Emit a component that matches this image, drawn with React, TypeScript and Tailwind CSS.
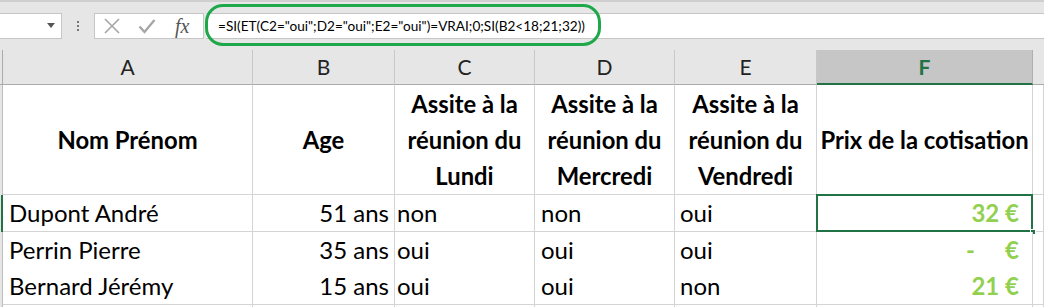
import React from 'react';

type Row = {
  name: string;
  age: string;
  c: string;
  d: string;
  e: string;
  price: string;
  selected?: boolean;
};

const rows: Row[] = [
  { name: 'Dupont André', age: '51 ans', c: 'non', d: 'non', e: 'oui', price: '32', selected: true },
  { name: 'Perrin Pierre', age: '35 ans', c: 'oui', d: 'oui', e: 'oui', price: '-' },
  { name: 'Bernard Jérémy', age: '15 ans', c: 'oui', d: 'oui', e: 'non', price: '21' },
];

const formula = '=SI(ET(C2="oui";D2="oui";E2="oui")=VRAI;0;SI(B2<18;21;32))';

const cols = 'grid grid-cols-[3px_250px_142px_140px_140px_142px_216px_1fr]';
const cell = 'border-r border-b border-[#d4d4d4] bg-white';

function FormulaBar() {
  return (
    <div className="relative h-[50px] bg-[#e6e6e6] border-t-2 border-[#cfcfcf]">
      <div className="flex items-center h-[37px] pt-[11px]">
        <div className="relative w-[62px] h-[26px] bg-white border border-[#c6c6c6] border-l-0">
          <div className="absolute right-[6px] top-[9px] w-0 h-0 border-l-[4px] border-r-[4px] border-t-[5px] border-l-transparent border-r-transparent border-t-[#555]" />
        </div>
        <div className="w-[32px] flex flex-col items-center gap-[2px]">
          <span className="w-[2px] h-[2px] bg-[#777]" />
          <span className="w-[2px] h-[2px] bg-[#777]" />
          <span className="w-[2px] h-[2px] bg-[#777]" />
        </div>
        <div className="flex items-center w-[110px] h-[26px] bg-white border border-[#c6c6c6]">
          <svg className="ml-[8px]" width="18" height="16" viewBox="0 0 18 16">
            <path d="M2 1 L16 15 M16 1 L2 15" stroke="#a6a6a6" strokeWidth="1.6" fill="none" />
          </svg>
          <svg className="ml-[17px]" width="18" height="16" viewBox="0 0 18 16">
            <path d="M1.5 8.5 L6.5 14 L16.5 2" stroke="#a6a6a6" strokeWidth="2.4" fill="none" />
          </svg>
          <span className="ml-[19px] font-['Liberation_Serif',serif] italic text-[20px] leading-none text-[#555]">
            fx
          </span>
        </div>
        <div className="flex-1 h-[26px] bg-white border-y border-[#c6c6c6] ml-[2px] flex items-center pl-[12px]">
          <span className="font-['Lato',sans-serif] text-[13.6px] text-black whitespace-nowrap">
            {formula}
          </span>
        </div>
      </div>
      <div className="absolute left-[205px] top-[2px] w-[396px] h-[42px] border-[3px] border-[#1fa84a] rounded-[18px]" />
    </div>
  );
}

function ColumnHeaders() {
  const letters = ['A', 'B', 'C', 'D', 'E'];
  return (
    <div className={`${cols} h-[35px] font-['Lato',sans-serif] text-[21px] text-[#222]`}>
      <div className="bg-[#e6e6e6] border-r border-b border-[#ababab]" />
      {letters.map((l) => (
        <div
          key={l}
          className="flex items-center justify-center bg-[#e6e6e6] border-r border-[#c8c8c8] border-b border-b-[#ababab]"
        >
          {l}
        </div>
      ))}
      <div className="flex items-center justify-center bg-[#c6c6c6] border-r border-[#b0b0b0] border-b-2 border-b-[#217346] font-bold text-[#217346]">
        F
      </div>
      <div className="bg-[#e6e6e6] border-b border-[#ababab]" />
    </div>
  );
}

function HeaderRow() {
  const multi = [
    ['Assite à la', 'réunion du', 'Lundi'],
    ['Assite à la', 'réunion du', 'Mercredi'],
    ['Assite à la', 'réunion du', 'Vendredi'],
  ];
  return (
    <div className={`${cols} h-[110px] font-['Lato',sans-serif] font-bold text-[23.8px] text-black leading-[36px]`}>
      <div className="bg-[#e6e6e6] border-r border-[#bdbdbd]" />
      <div className={`${cell} flex items-center justify-center`}>Nom Prénom</div>
      <div className={`${cell} flex items-center justify-center`}>Age</div>
      {multi.map((lines, i) => (
        <div key={i} className={`${cell} flex flex-col items-center justify-center`}>
          {lines.map((t) => (
            <span key={t} className="whitespace-nowrap">{t}</span>
          ))}
        </div>
      ))}
      <div className={`${cell} flex items-center justify-center whitespace-nowrap`}>Prix de la cotisation</div>
      <div className={cell} />
    </div>
  );
}

function DataRow({ row }: { row: Row }) {
  return (
    <div className={`${cols} h-[36.7px] font-['Lato',sans-serif] text-[24px] text-black`}>
      <div className={`bg-[#e6e6e6] border-r border-[#bdbdbd] ${row.selected ? 'border-r-2 border-r-[#217346]' : ''}`} />
      <div className={`${cell} flex items-center pl-[6px] whitespace-nowrap`}>{row.name}</div>
      <div className={`${cell} flex items-center justify-end pr-[5px] whitespace-nowrap`}>{row.age}</div>
      <div className={`${cell} flex items-center pl-[2px]`}>{row.c}</div>
      <div className={`${cell} flex items-center pl-[6px]`}>{row.d}</div>
      <div className={`${cell} flex items-center pl-[5px]`}>{row.e}</div>
      <div className={`${cell} relative flex items-center justify-end pr-[13px] font-bold text-[#92d050]`}>
        {row.price === '-' ? (
          <span className="flex">
            <span>-</span>
            <span className="w-[44px] text-right">€</span>
          </span>
        ) : (
          <span>{row.price}&nbsp;€</span>
        )}
        {row.selected && (
          <>
            <div className="absolute -left-px -top-px -right-px -bottom-px border-2 border-[#217346]" />
            <div className="absolute -right-[4px] -bottom-[4px] w-[6px] h-[6px] bg-[#217346] border border-white" />
          </>
        )}
      </div>
      <div className={cell} />
    </div>
  );
}

export default function App() {
  return (
    <div className="w-[1044px] h-[307px] overflow-hidden bg-white">
      <FormulaBar />
      <ColumnHeaders />
      <HeaderRow />
      {rows.map((r) => (
        <DataRow key={r.name} row={r} />
      ))}
      <div className={`${cols} h-[10px]`}>
        <div className="bg-[#e6e6e6] border-r border-[#bdbdbd]" />
        <div className={cell} />
        <div className={cell} />
        <div className={cell} />
        <div className={cell} />
        <div className={cell} />
        <div className={cell} />
        <div className={cell} />
      </div>
    </div>
  );
}
